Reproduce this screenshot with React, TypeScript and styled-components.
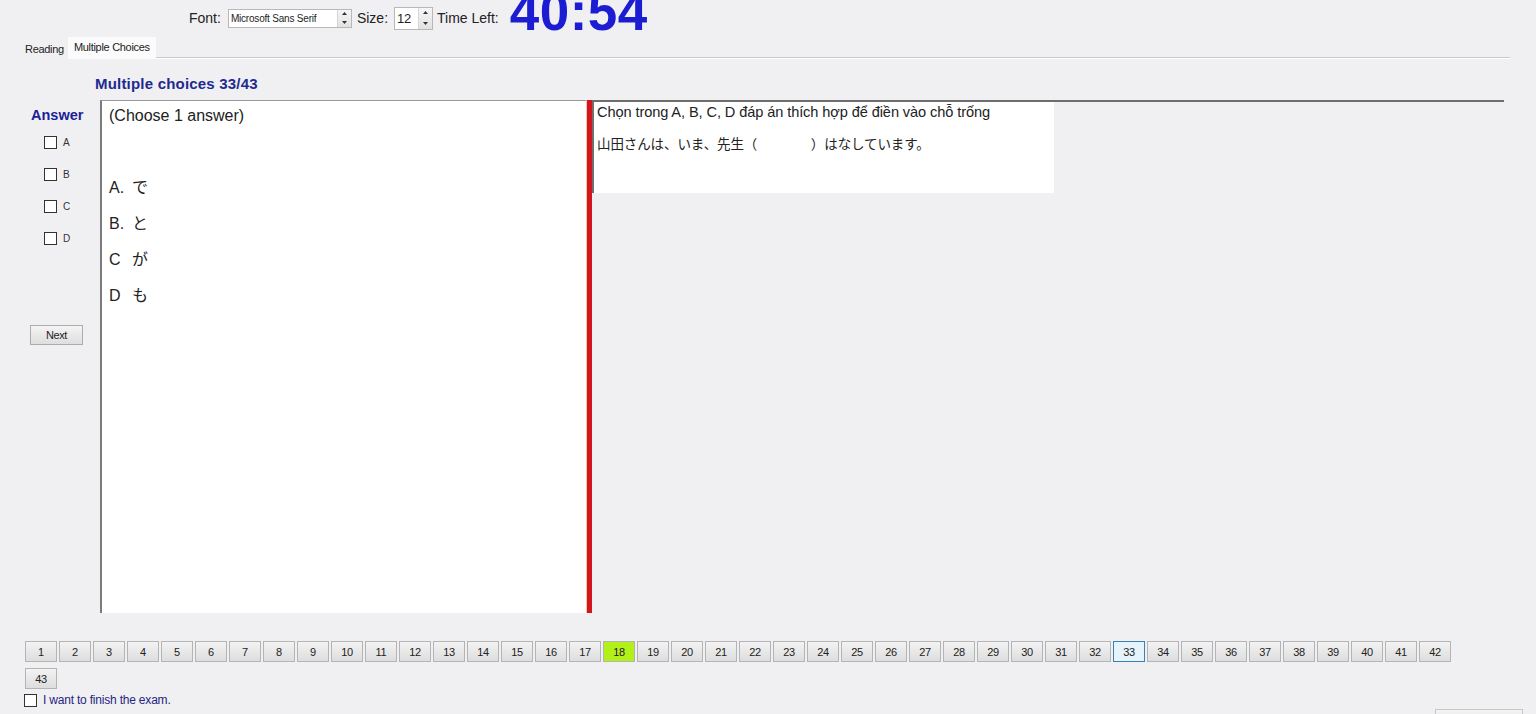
import React from 'react';
import styled, { createGlobalStyle } from 'styled-components';

const GlobalStyle = createGlobalStyle`
  html, body {
    margin: 0;
    padding: 0;
    background: #f0f0f2;
    overflow: hidden;
  }
  body {
    font-family: "Liberation Sans", "Noto Sans CJK JP", Arial, sans-serif;
    color: #1e1e1e;
  }
`;

const Page = styled.div`
  width: 1536px;
  height: 714px;
  overflow: hidden;
  display: flex;
  flex-direction: column;
  position: relative;
`;

const TopBar = styled.div`
  height: 36px;
  display: flex;
  align-items: center;
  padding-left: 189px;
  font-size: 14px;
`;

const Label = styled.span<{ $ml?: number }>`
  margin-left: ${(p) => p.$ml ?? 0}px;
  color: #222;
`;

const SpinBox = styled.div<{ $w: number; $h: number; $ml: number }>`
  width: ${(p) => p.$w}px;
  height: ${(p) => p.$h}px;
  box-sizing: border-box;
  border: 1px solid #b8b8b8;
  background: #fff;
  display: flex;
  align-items: center;
  margin-left: ${(p) => p.$ml}px;
`;

const SpinText = styled.span<{ $size: number }>`
  flex: 1;
  font-size: ${(p) => p.$size}px;
  padding-left: 2px;
  white-space: nowrap;
  overflow: hidden;
  letter-spacing: -0.2px;
`;

const Arrows = styled.div`
  width: 13px;
  height: 100%;
  display: flex;
  flex-direction: column;
  border-left: 1px solid #d6d6d6;
  background: linear-gradient(#f6f6f6, #e2e2e2);
`;

const ArrowCell = styled.div`
  flex: 1;
  display: flex;
  align-items: center;
  justify-content: center;
`;

const Timer = styled.div`
  align-self: flex-start;
  margin-top: -15px;
  margin-left: 11px;
  font-size: 53px;
  line-height: 54px;
  font-weight: bold;
  color: #1c1cd2;
  letter-spacing: 0.5px;
`;

const TabStrip = styled.div`
  height: 22px;
  display: flex;
  align-items: flex-end;
  padding-left: 21px;
  font-size: 11px;
`;

const Tab = styled.div<{ $active?: boolean }>`
  height: ${(p) => (p.$active ? 22 : 19)}px;
  display: flex;
  align-items: ${(p) => (p.$active ? 'flex-start' : 'center')};
  padding: ${(p) => (p.$active ? '4px 6px 0' : '0 4px')};
  box-sizing: border-box;
  background: ${(p) => (p.$active ? '#fbfbfb' : 'transparent')};
  margin-bottom: ${(p) => (p.$active ? -1 : 0)}px;
  letter-spacing: -0.3px;
  color: #222;
`;

const TabLine = styled.div`
  flex: 0 0 1354px;
  height: 1px;
  background: #c9c9cc;
  box-shadow: 0 1px 0 #ffffff;
`;

const Heading = styled.div`
  margin: 17px 0 0 95px;
  height: 25px;
  font-size: 15px;
  font-weight: bold;
  color: #1e2a90;
  letter-spacing: 0.2px;
`;

const MainRow = styled.div`
  display: flex;
  height: 513px;
`;

const Sidebar = styled.div`
  width: 100px;
  display: flex;
  flex-direction: column;
`;

const AnswerTitle = styled.div`
  margin: 7px 0 0 31px;
  font-size: 14.5px;
  font-weight: bold;
  color: #1c2296;
  height: 16px;
`;

const ChoiceRow = styled.label`
  display: flex;
  align-items: center;
  height: 32px;
  padding-left: 44px;
  font-size: 10px;
  color: #333;
`;

const CheckBox = styled.span`
  width: 13px;
  height: 13px;
  box-sizing: border-box;
  border: 1px solid #333;
  background: #fff;
  margin-right: 6px;
  display: inline-block;
`;

const Choices = styled.div`
  margin-top: 3px;
`;

const NextButton = styled.button`
  margin: 71px 0 0 30px;
  width: 53px;
  height: 20px;
  font-family: inherit;
  font-size: 11px;
  letter-spacing: -0.4px;
  color: #222;
  border: 1px solid #acacac;
  background: linear-gradient(#f4f4f4, #dedede);
  padding: 0;
`;

const QuestionBox = styled.div`
  width: 486px;
  box-sizing: border-box;
  background: #fff;
  border-left: 2px solid #7c7c7c;
  border-top: 1px solid #9a9a9a;
  padding: 4px 0 0 7px;
  font-size: 16px;
  color: #222;
`;

const Instruction = styled.div`
  line-height: 22px;
`;

const Options = styled.div`
  margin-top: 43px;
`;

const Option = styled.div`
  line-height: 36px;
  display: flex;
`;

const OptionKey = styled.span`
  width: 23px;
`;

const Splitter = styled.div`
  width: 5px;
  background: #d4141e;
  border-left: 1px solid #f3c9a0;
`;

const RightPane = styled.div`
  flex: 0 0 912px;
  border-top: 2px solid #6e6e6e;
  display: flex;
  flex-direction: column;
`;

const PromptBox = styled.div`
  width: 462px;
  height: 91px;
  box-sizing: border-box;
  background: #fff;
  border-left: 2px solid #6e6e6e;
  padding: 1px 0 0 3px;
  font-size: 14.6px;
  color: #222;
`;

const PromptLine = styled.div<{ $mt?: number }>`
  line-height: 18px;
  margin-top: ${(p) => p.$mt ?? 0}px;
  white-space: pre;
  letter-spacing: -0.1px;
`;

const Jp = styled.span`
  font-size: 13.5px;
`;

const Footer = styled.div`
  margin: 28px 0 0 25px;
  width: 1440px;
  display: flex;
  flex-wrap: wrap;
  column-gap: 2px;
  row-gap: 6px;
`;

const NumButton = styled.button<{ $state?: 'done' | 'current' }>`
  width: 32px;
  height: 21px;
  padding: 0;
  font-family: inherit;
  font-size: 11px;
  letter-spacing: -0.3px;
  color: #222;
  box-sizing: border-box;
  border: 1px solid
    ${(p) => (p.$state === 'current' ? '#3c7fb1' : '#b4b4b4')};
  background: ${(p) =>
    p.$state === 'done'
      ? '#b2f01c'
      : p.$state === 'current'
      ? '#e5f4fc'
      : 'linear-gradient(#f3f3f3, #dddddd)'};
`;

const FinishRow = styled.label`
  display: flex;
  align-items: center;
  margin: 4px 0 0 24px;
  font-size: 12px;
  color: #262680;
  letter-spacing: -0.2px;
`;

const CornerButton = styled.div`
  position: absolute;
  left: 1435px;
  top: 709px;
  width: 86px;
  height: 22px;
  border: 1px solid #c8c8c8;
  background: linear-gradient(#f4f4f4, #dcdcdc);
`;

const Tri = ({ up }: { up?: boolean }) => (
  <svg width="5" height="3" viewBox="0 0 5 3">
    <path d={up ? 'M0 3 L2.5 0 L5 3 Z' : 'M0 0 L2.5 3 L5 0 Z'} fill="#333" />
  </svg>
);

const Spinner = () => (
  <Arrows>
    <ArrowCell>
      <Tri up />
    </ArrowCell>
    <ArrowCell>
      <Tri />
    </ArrowCell>
  </Arrows>
);

const answers = ['A', 'B', 'C', 'D'];
const options = [
  { key: 'A.', text: 'で' },
  { key: 'B.', text: 'と' },
  { key: 'C', text: 'が' },
  { key: 'D', text: 'も' },
];

const App: React.FC = () => {
  const numbers = Array.from({ length: 43 }, (_, i) => i + 1);

  return (
    <Page>
      <GlobalStyle />
      <TopBar>
        <Label>Font:</Label>
        <SpinBox $w={124} $h={19} $ml={7}>
          <SpinText $size={10}>Microsoft Sans Serif</SpinText>
          <Spinner />
        </SpinBox>
        <Label $ml={5}>Size:</Label>
        <SpinBox $w={39} $h={23} $ml={6}>
          <SpinText $size={13}>12</SpinText>
          <Spinner />
        </SpinBox>
        <Label $ml={4}>Time Left:</Label>
        <Timer>40:54</Timer>
      </TopBar>

      <TabStrip>
        <Tab>Reading</Tab>
        <Tab $active>Multiple Choices</Tab>
        <TabLine />
      </TabStrip>

      <Heading>Multiple choices 33/43</Heading>

      <MainRow>
        <Sidebar>
          <AnswerTitle>Answer</AnswerTitle>
          <Choices>
            {answers.map((a) => (
              <ChoiceRow key={a}>
                <CheckBox />
                {a}
              </ChoiceRow>
            ))}
          </Choices>
          <NextButton>Next</NextButton>
        </Sidebar>

        <QuestionBox>
          <Instruction>(Choose 1 answer)</Instruction>
          <Options>
            {options.map((o) => (
              <Option key={o.key}>
                <OptionKey>{o.key}</OptionKey>
                {o.text}
              </Option>
            ))}
          </Options>
        </QuestionBox>

        <Splitter />

        <RightPane>
          <PromptBox>
            <PromptLine>Chọn trong A, B, C, D đáp án thích hợp để điền vào chỗ trống</PromptLine>
            <PromptLine $mt={14}>
              <Jp>山田さんは、いま、先生（　　　　）はなしています。</Jp>
            </PromptLine>
          </PromptBox>
        </RightPane>
      </MainRow>

      <Footer>
        {numbers.map((n) => (
          <NumButton
            key={n}
            $state={n === 18 ? 'done' : n === 33 ? 'current' : undefined}
          >
            {n}
          </NumButton>
        ))}
      </Footer>

      <FinishRow>
        <CheckBox />
        I want to finish the exam.
      </FinishRow>

      <CornerButton />
    </Page>
  );
};

export default App;
